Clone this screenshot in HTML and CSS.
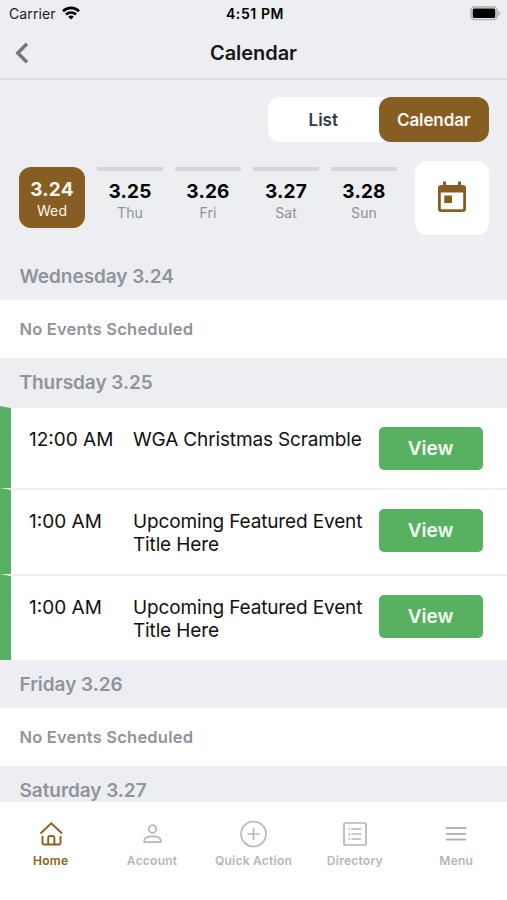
FILE: index.html
```html
<!DOCTYPE html>
<html lang="en">
<head>
<meta charset="utf-8">
<title>Calendar</title>
<link rel="stylesheet" href="styles.css">
</head>
<body>
<div class="app">
  <div class="status">
    <div class="carrier"><span>Carrier</span>
      <svg width="18" height="14" viewBox="0 0 18 14" fill="none" stroke="#000" stroke-width="2.6"><path d="M1 5.2a11.4 11.4 0 0 1 16 0"/><path d="M4 8.5a7.2 7.2 0 0 1 10 0"/><path d="M9 13.6 6.2 10.8a4 4 0 0 1 5.6 0z" fill="#000" stroke="none"/></svg>
    </div>
    <time class="clock">4:51 PM</time>
    <svg class="battery" width="31" height="15" viewBox="0 0 31 15"><rect x="1" y="1" width="26" height="12.6" rx="3.5" fill="none" stroke="#aaabad" stroke-width="1.4"/><rect x="2.7" y="2.6" width="22.6" height="9.4" rx="1.5"/><path d="M28.4 5v5c2.2-.8 2.2-4.200 0-5z" fill="#aaabad"/></svg>
  </div>
  <header class="nav">
    <svg class="back" width="14" height="22" viewBox="0 0 14 22" fill="none" stroke="#747577" stroke-width="3.4"><path d="M12 1.700 2.700 11 12 20.300"/></svg>
    <h1>Calendar</h1>
  </header>
  <div class="toggle"><button>List</button><button class="on">Calendar</button></div>
  <div class="days">
    <div class="day selected"><b>3.24</b><span>Wed</span></div>
    <div class="day"><b>3.25</b><span>Thu</span></div>
    <div class="day"><b>3.26</b><span>Fri</span></div>
    <div class="day"><b>3.27</b><span>Sat</span></div>
    <div class="day"><b>3.28</b><span>Sun</span></div>
    <button class="picker"><svg width="28" height="32" viewBox="0 0 28 32" fill="#865d22"><path d="M5 .5h3V4h12V.5h3V4h2a3 3 0 0 1 3 3v21a3 3 0 0 1-3 3H3a3 3 0 0 1-3-3V7a3 3 0 0 1 3-3h2zM2.800 11.500v16.700h22.400V11.500z" fill-rule="evenodd"/><path d="M6.200 14.500h7.800v7.500H6.200z"/></svg></button>
  </div>
  <main class="agenda">
    <h2 class="first">Wednesday 3.24</h2>
    <p class="empty">No Events Scheduled</p>
    <h2>Thursday 3.25</h2>
    <article class="event lead"><time>12:00 AM</time><div class="title">WGA Christmas Scramble</div><button>View</button></article>
    <article class="event"><time>1:00 AM</time><div class="title">Upcoming Featured Event Title Here</div><button>View</button></article>
    <article class="event"><time>1:00 AM</time><div class="title">Upcoming Featured Event Title Here</div><button>View</button></article>
    <h2>Friday 3.26</h2>
    <p class="empty">No Events Scheduled</p>
    <h2>Saturday 3.27</h2>
  </main>
  <nav class="tabs">
    <a class="active"><svg width="26" height="28" viewBox="0 0 26 28" fill="none" stroke="currentColor" stroke-width="1.900"><path d="M2.500 13.500 13.300 3.200l10.800 10.300M4.500 16v7a1.500 1.500 0 0 0 1.500 1.500h15a1.500 1.500 0 0 0 1.500-1.500V16M10.200 24.500V18a2 2 0 0 1 2-2h2.200a2 2 0 0 1 2 2v6.500"/></svg><span>Home</span></a>
    <a><svg width="26" height="28" viewBox="0 0 26 28" fill="none" stroke="currentColor" stroke-width="1.800"><circle cx="13.500" cy="9" r="3.800"/><path d="M5.300 22.200v-2c0-5.200 16.400-5.200 16.400 0v2z"/></svg><span>Account</span></a>
    <a><svg width="28" height="28" viewBox="0 0 28 28" fill="none" stroke="currentColor" stroke-width="1.600"><circle cx="14.500" cy="14" r="12.500"/><path d="M14.500 8v12M8.500 14h12"/></svg><span>Quick Action</span></a>
    <a><svg width="26" height="28" viewBox="0 0 26 28" fill="none" stroke="currentColor" stroke-width="1.700"><rect x="2" y="3" width="22" height="22" rx="1"/><path d="M9.500 9h9.700M9.500 14h9.700M9.500 19h9.700M6.300 9H8M6.300 14H8M6.300 19H8"/></svg><span>Directory</span></a>
    <a><svg width="26" height="28" viewBox="0 0 26 28" fill="none" stroke="currentColor" stroke-width="1.900"><path d="M2.800 8h20.400M2.800 14h20.400M2.800 19.500h20.400"/></svg><span>Menu</span></a>
  </nav>
</div>
</body>
</html>
```
FILE: styles.css
```css
* { box-sizing: border-box; margin: 0; padding: 0; }
body { font-family: Inter, "Liberation Sans", sans-serif; background: #fff; color: #000; }
button { font: inherit; border: 0; }
.app { width: 507px; height: 900px; background: #edeef2; display: flex; flex-direction: column; overflow: hidden; }

.status { height: 28px; flex: none; display: grid; grid-template-columns: 1fr auto 1fr; align-items: center; padding: 0 6px 2px 9px; font-size: 14px; }
.carrier { display: flex; align-items: center; gap: 6px; color: #1c1c1e; letter-spacing: .1px; }
.clock { font-weight: 600; font-size: 14px; letter-spacing: .6px; margin-right: -1px; margin-left: -1px; }
.battery { justify-self: end; }

.nav { height: 52px; flex: none; display: grid; grid-template-columns: 60px 1fr 60px; align-items: center; padding-bottom: 1px; border-bottom: 2px solid #dddee1; }
.back { margin-left: 15px; }
.nav h1 { text-align: center; font-size: 20px; font-weight: 600; color: #17171a; letter-spacing: -.05px; }

.toggle { flex: none; align-self: flex-end; display: flex; width: 221px; height: 45px; margin: 17px 18px 0 0; background: #fff; border-radius: 12px; }
.toggle button { flex: 1; background: none; font-size: 17px; font-weight: 600; color: #333947; border-radius: 12px; }
.toggle .on { background: #865d22; color: #fdf8ef; letter-spacing: -.1px; }

.days { flex: none; display: flex; align-items: flex-start; gap: 12px; height: 74px; margin-top: 19px; padding: 0 18px 0 19px; }
.day { width: 66px; height: 61px; margin-top: 6px; border-top: 4px solid #d4d6da; display: flex; flex-direction: column; align-items: center; padding-top: 8px; }
.day b { font-size: 19px; line-height: 25px; font-weight: 700; letter-spacing: .2px; }
.day span { font-size: 14px; line-height: 17px; color: #8f9096; letter-spacing: .1px; }
.day.selected { border: 0; padding-top: 10px; border-radius: 12px; background: #865d22; }
.day.selected b, .day.selected span { color: #fff9ed; }
.picker { margin-left: auto; width: 74px; height: 74px; border-radius: 12px; background: #fff; display: flex; align-items: center; justify-content: center; }
.picker svg { margin-top: -2px; }

.agenda { flex: 1; min-height: 0; overflow: hidden; }
.agenda h2 { height: 48px; padding-left: 19.5px; font-size: 19px; line-height: 50px; font-weight: 600; letter-spacing: -.05px; color: #90939c; }
.agenda h2.first { height: 65px; line-height: 84px; }
.empty { height: 58px; padding-left: 19.5px; background: #fff; font-size: 16.5px; line-height: 58px; font-weight: 600; letter-spacing: .2px; color: #90939c; }
.event { height: 86px; display: grid; grid-template-columns: 104px 235px 104px; padding: 20px 0 0 18px; align-items: start; background: #fff; border-left: 11px solid #57b160; border-top: 2px solid #f1f1f3; font-size: 19px; line-height: 23px; color: #111; }
.event.lead { height: 82px; border-top-color: #edeef2; }
.title { letter-spacing: -.14px; }
.event button { height: 43px; margin: -1px 0 0 10.5px; width: 104px; border-radius: 5px; background: #57b160; color: #f5fff5; font-size: 19px; font-weight: 600; }

.tabs { flex: none; height: 98px; background: #fff; display: grid; grid-template-columns: repeat(5, 1fr); padding-top: 18px; }
.tabs a { display: flex; flex-direction: column; align-items: center; gap: 5px; color: #b4b6ba; font-size: 12px; line-height: 16px; font-weight: 600; letter-spacing: .25px; white-space: nowrap; }
.tabs .active { color: #8b6122; }
```
